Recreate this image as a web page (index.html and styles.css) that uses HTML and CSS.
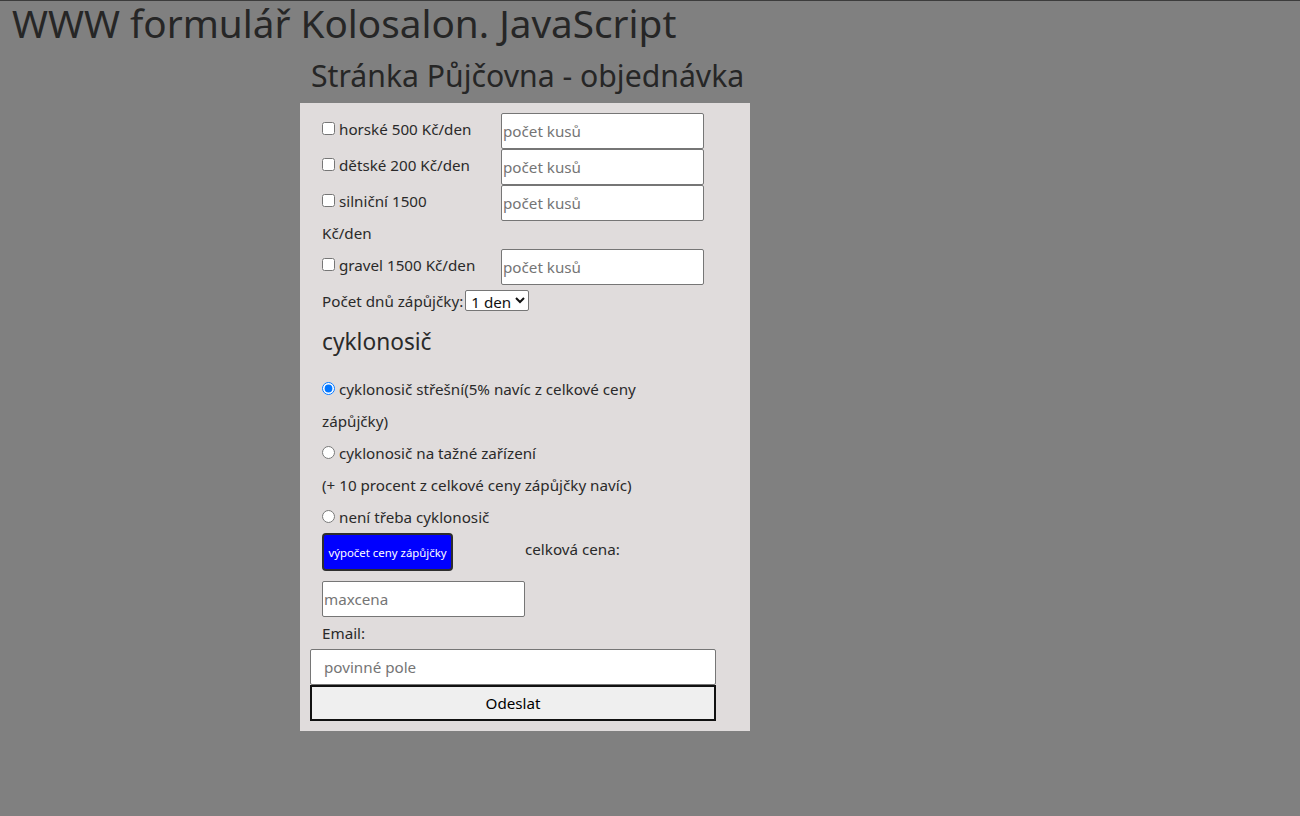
FILE: index.html
```html
<!DOCTYPE html>
<html lang="cs">
<head>
<meta charset="utf-8">
<title>Půjčovna - objednávka</title>
<link rel="stylesheet" href="styles.css">
</head>
<body>
<h1 class="title">WWW formulář Kolosalon. JavaScript</h1>
<main class="wrap">
  <h2 class="subtitle">Stránka Půjčovna - objednávka</h2>
  <form class="card">
    <div class="bikes">
      <label class="bike"><input type="checkbox" class="check">horské 500 Kč/den</label>
      <input type="text" class="field" placeholder="počet kusů">
      <label class="bike"><input type="checkbox" class="check">dětské 200 Kč/den</label>
      <input type="text" class="field" placeholder="počet kusů">
      <label class="bike"><input type="checkbox" class="check">silniční 1500<br>Kč/den</label>
      <input type="text" class="field" placeholder="počet kusů">
      <label class="bike"><input type="checkbox" class="check">gravel 1500 Kč/den</label>
      <input type="text" class="field" placeholder="počet kusů">
    </div>
    <div class="days"><span class="days-label">Počet dnů zápůjčky:</span><select class="days-select"><option>1 den</option><option>2 dny</option><option>3 dny</option></select></div>
    <h3 class="section">cyklonosič</h3>
    <div class="carriers">
      <label class="line"><input type="radio" name="nosic" class="radio" checked>cyklonosič střešní(5% navíc z celkové ceny<br>zápůjčky)</label>
      <label class="line"><input type="radio" name="nosic" class="radio">cyklonosič na tažné zařízení</label>
      <p class="line">(+ 10 procent z celkové ceny zápůjčky navíc)</p>
      <label class="line"><input type="radio" name="nosic" class="radio">není třeba cyklonosič</label>
    </div>
    <div class="calc">
      <button type="button" class="calc-btn">výpočet ceny zápůjčky</button>
      <span class="total">celková cena:</span>
    </div>
    <input type="text" class="field maxcena" placeholder="maxcena">
    <div class="email-label">Email:</div>
    <input type="email" class="email" placeholder="povinné pole">
    <button type="submit" class="submit">Odeslat</button>
  </form>
</main>
</body>
</html>
```
FILE: styles.css
```css
html, body {
  margin: 0;
  padding: 0;
}

body {
  background: #808080;
  border-top: 1px solid #3c3c3c;
  font-family: "Noto Sans", "DejaVu Sans", sans-serif;
  color: #262626;
}

.title {
  margin: 0;
  padding-left: 12px;
  font-size: 38.7px;
  line-height: 45px;
  font-weight: 400;
  white-space: nowrap;
}

.wrap {
  margin-left: 300px;
  width: 450px;
}

.subtitle {
  margin: 10px 0 7px 0;
  padding-left: 11px;
  font-size: 30.2px;
  line-height: 40px;
  font-weight: 400;
  white-space: nowrap;
}

.card {
  background: #e0dcdc;
  padding: 10px 34px 10px 10px;
  font-size: 15.2px;
  line-height: 32px;
  color: #2a2a2a;
}

.bikes {
  display: grid;
  grid-template-columns: 179px 203px;
  align-items: start;
  margin-left: 12px;
}

.bike {
  display: block;
  white-space: nowrap;
}

.check,
.radio {
  margin: 0 4px 0 0;
}

.field {
  box-sizing: border-box;
  width: 203px;
  height: 36px;
  margin: 0;
  padding: 0 1px;
  border: 1px solid #767676;
  border-radius: 2px;
  background: #fff;
  font-family: "Noto Sans", "DejaVu Sans", sans-serif;
  font-size: 15.2px;
  color: #222;
}

.field::placeholder,
.email::placeholder {
  color: #757575;
}

.days {
  display: flex;
  align-items: flex-start;
  margin-left: 12px;
  height: 32px;
}

.days-label {
  margin-right: 2px;
}

.days-select {
  box-sizing: border-box;
  height: 21px;
  width: 64px;
  margin: 5px 0 0 0;
  padding: 0 0 0 1px;
  border: 1px solid #767676;
  border-radius: 2px;
  background: #fff;
  font-family: "Noto Sans", "DejaVu Sans", sans-serif;
  font-size: 15.2px;
  color: #111;
}

.section {
  margin: 2px 0 8px 12px;
  font-size: 22.7px;
  line-height: 46px;
  font-weight: 400;
}

.carriers {
  margin-left: 12px;
}

.line {
  display: block;
  margin: 0;
}

.calc {
  display: flex;
  align-items: flex-start;
  margin-left: 12px;
}

.calc-btn {
  box-sizing: border-box;
  width: 131px;
  height: 38px;
  padding: 0;
  border: 2px solid #2e2e2e;
  border-radius: 4px;
  background: #0000ff;
  color: #fff;
  font-family: "Noto Sans", "DejaVu Sans", sans-serif;
  font-size: 11.4px;
}

.total {
  margin-left: 72px;
}

.maxcena {
  display: block;
  margin: 10px 0 0 12px;
}

.email-label {
  margin-left: 12px;
}

.email {
  display: block;
  box-sizing: border-box;
  width: 406px;
  height: 36px;
  margin: 0;
  padding: 0 13px;
  border: 1px solid #767676;
  border-radius: 2px;
  background: #fff;
  font-family: "Noto Sans", "DejaVu Sans", sans-serif;
  font-size: 15.2px;
}

.submit {
  display: block;
  box-sizing: border-box;
  width: 406px;
  height: 36px;
  margin: 0;
  padding: 0;
  border: 2px solid #111;
  border-radius: 0;
  background: #efefef;
  color: #000;
  font-family: "Noto Sans", "DejaVu Sans", sans-serif;
  font-size: 15.2px;
}
```
